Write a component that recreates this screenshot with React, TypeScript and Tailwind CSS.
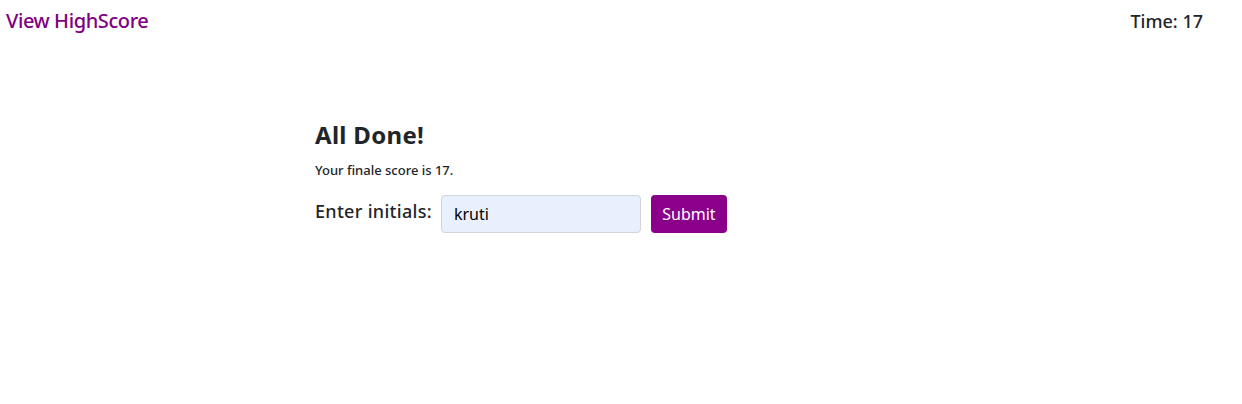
export default function App() {
  return (
    <div className="min-h-[404px] bg-white font-['Noto_Sans',sans-serif] text-[#212529]">
      <header className="flex justify-between items-center h-[42px] pl-[6px] pr-[39px]">
        <a href="#" className="text-[20px] font-medium text-[#800080] tracking-[-0.4px]">
          View HighScore
        </a>
        <div className="text-[18px] font-medium">Time: 17</div>
      </header>
      <main className="pl-[315px] pt-[78px]">
        <h2 className="text-[24px] font-bold leading-[30px] tracking-[0.3px]">All Done!</h2>
        <p className="text-[13px] font-medium mt-[11px]">Your finale score is 17.</p>
        <form className="flex items-center mt-[14px]" onSubmit={(e) => e.preventDefault()}>
          <label className="text-[18px] font-medium mb-[4px] tracking-[0.3px]">Enter initials:</label>
          <input
            defaultValue="kruti"
            className="ml-[9px] w-[200px] h-[38px] rounded-[4px] border border-[#ced4da] bg-[#e8f0fe] px-3 text-[16px] text-black outline-none"
          />
          <button className="ml-[10px] w-[76px] h-[38px] rounded-[4px] bg-[#8b008b] text-white text-[16px]">
            Submit
          </button>
        </form>
      </main>
    </div>
  );
}
